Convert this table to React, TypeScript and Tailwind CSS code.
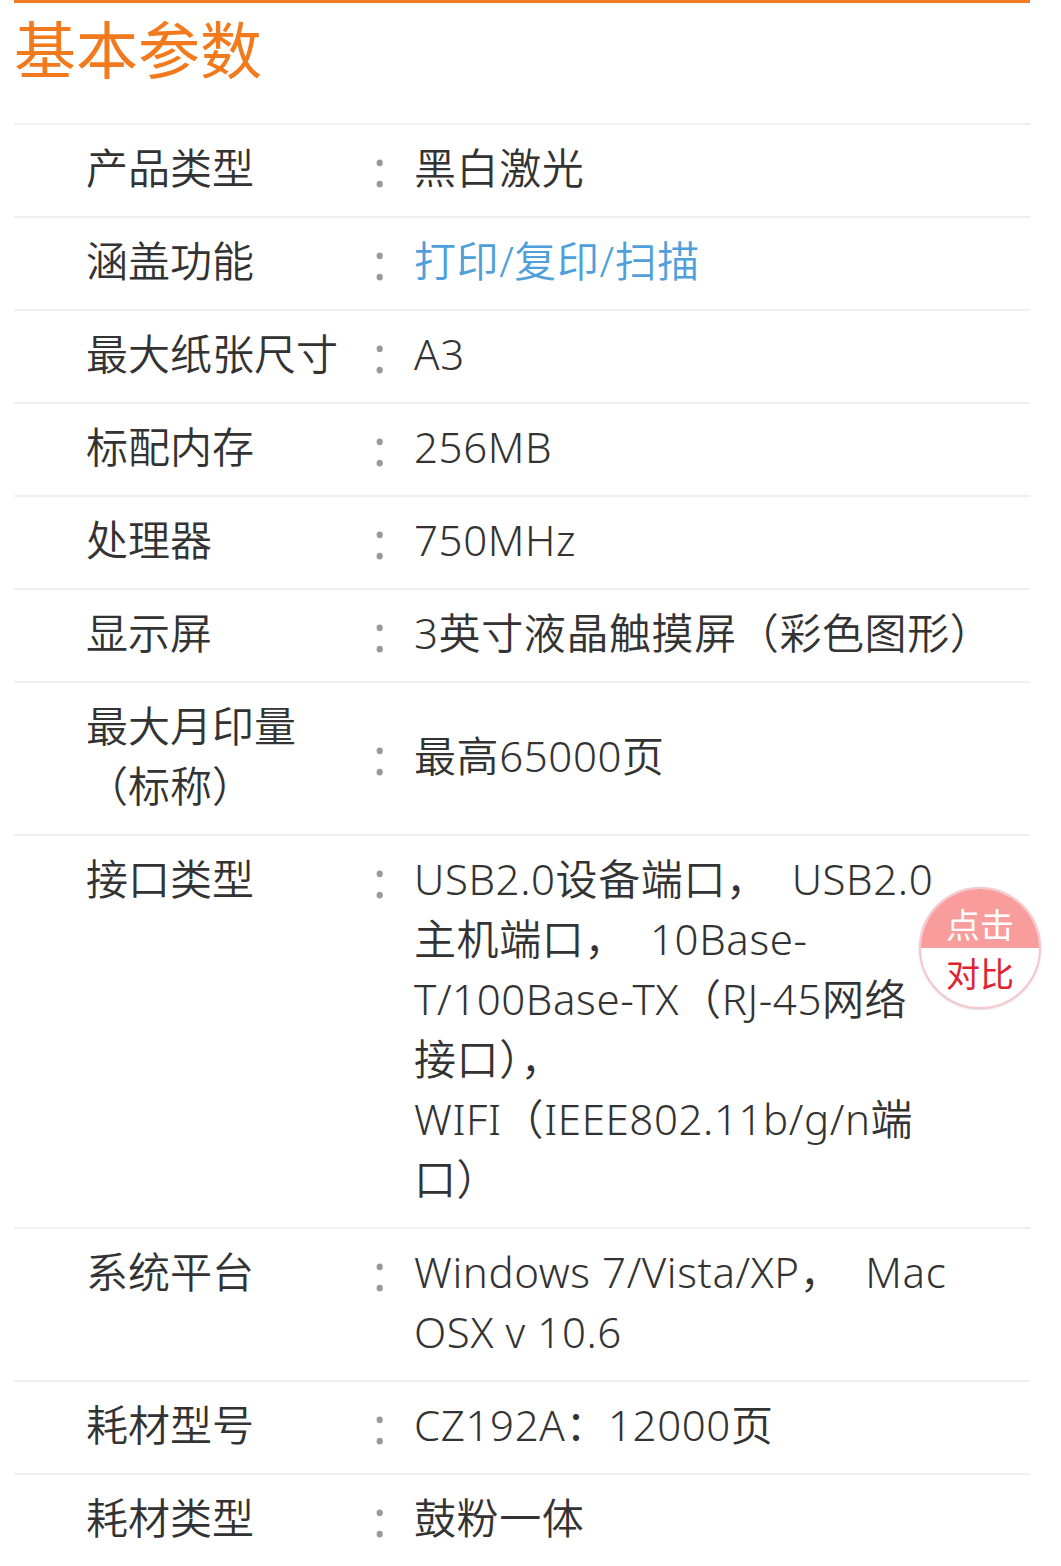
import React from "react";

type Spec = {
  label: string[];
  value: string[];
  link?: boolean;
};

const specs: Spec[] = [
  { label: ["产品类型"], value: ["黑白激光"] },
  { label: ["涵盖功能"], value: ["打印/复印/扫描"], link: true },
  { label: ["最大纸张尺寸"], value: ["A3"] },
  { label: ["标配内存"], value: ["256MB"] },
  { label: ["处理器"], value: ["750MHz"] },
  { label: ["显示屏"], value: ["3英寸液晶触摸屏（彩色图形）"] },
  { label: ["最大月印量", "（标称）"], value: ["最高65000页"] },
  {
    label: ["接口类型"],
    value: [
      "USB2.0设备端口，  USB2.0",
      "主机端口，  10Base-",
      "T/100Base-TX（RJ-45网络",
      "接口），",
      "WIFI（IEEE802.11b/g/n端",
      "口）",
    ],
  },
  { label: ["系统平台"], value: ["Windows 7/Vista/XP，  Mac", "OSX v 10.6"] },
  { label: ["耗材型号"], value: ["CZ192A：12000页"] },
  { label: ["耗材类型"], value: ["鼓粉一体"] },
];

function SpecRow({ item, last }: { item: Spec; last: boolean }) {
  return (
    <div
      className={`flex items-center border-t-2 border-[#efefef] pt-[13px] pb-[18px] pl-[72px] ${
        last ? "border-b-2" : ""
      }`}
    >
      <div className="w-[280px] shrink-0 self-start text-[#333]">
        {item.label.map((l) => (
          <div key={l} className="whitespace-nowrap">
            {l}
          </div>
        ))}
      </div>
      <div className="flex items-start">
        <span className="w-[48px] shrink-0 pl-[7px] text-[50px] font-normal text-[#999]">:</span>
        <div className={item.link ? "text-[#4e9fda]" : "text-[#333]"}>
          {item.value.map((v) => (
            <div key={v} className="whitespace-pre tracking-[0.6px]">
              {v}
            </div>
          ))}
        </div>
      </div>
    </div>
  );
}

export default function App() {
  return (
    <div
      className="relative min-h-[1566px] bg-white pl-[14px] pr-[31px] font-[350]"
      style={{ fontFamily: '"Noto Sans", "Noto Sans CJK SC", sans-serif' }}
    >
      <div className="h-[3px] bg-[#f27c22]" />
      <h2 className="mb-[33px] pt-[7px] text-[62px] leading-[80px] font-normal text-[#f27a1c]">
        基本参数
      </h2>

      <div className="text-[42px] leading-[60px]">
        {specs.map((item, i) => (
          <SpecRow key={item.label[0]} item={item} last={i === specs.length - 1} />
        ))}
      </div>

      {/* floating compare button */}
      <div className="absolute left-[919px] top-[887px] flex h-[122px] w-[122px] flex-col overflow-hidden rounded-full border-2 border-[#f5c6cb] bg-white text-[34px] leading-none font-normal shadow-sm">
        <div className="flex h-1/2 items-end justify-center bg-[#f99c9c] pb-[6px] text-white">
          点击
        </div>
        <div className="flex h-1/2 items-start justify-center pt-[9px] text-[#df2330]">
          对比
        </div>
      </div>
    </div>
  );
}
